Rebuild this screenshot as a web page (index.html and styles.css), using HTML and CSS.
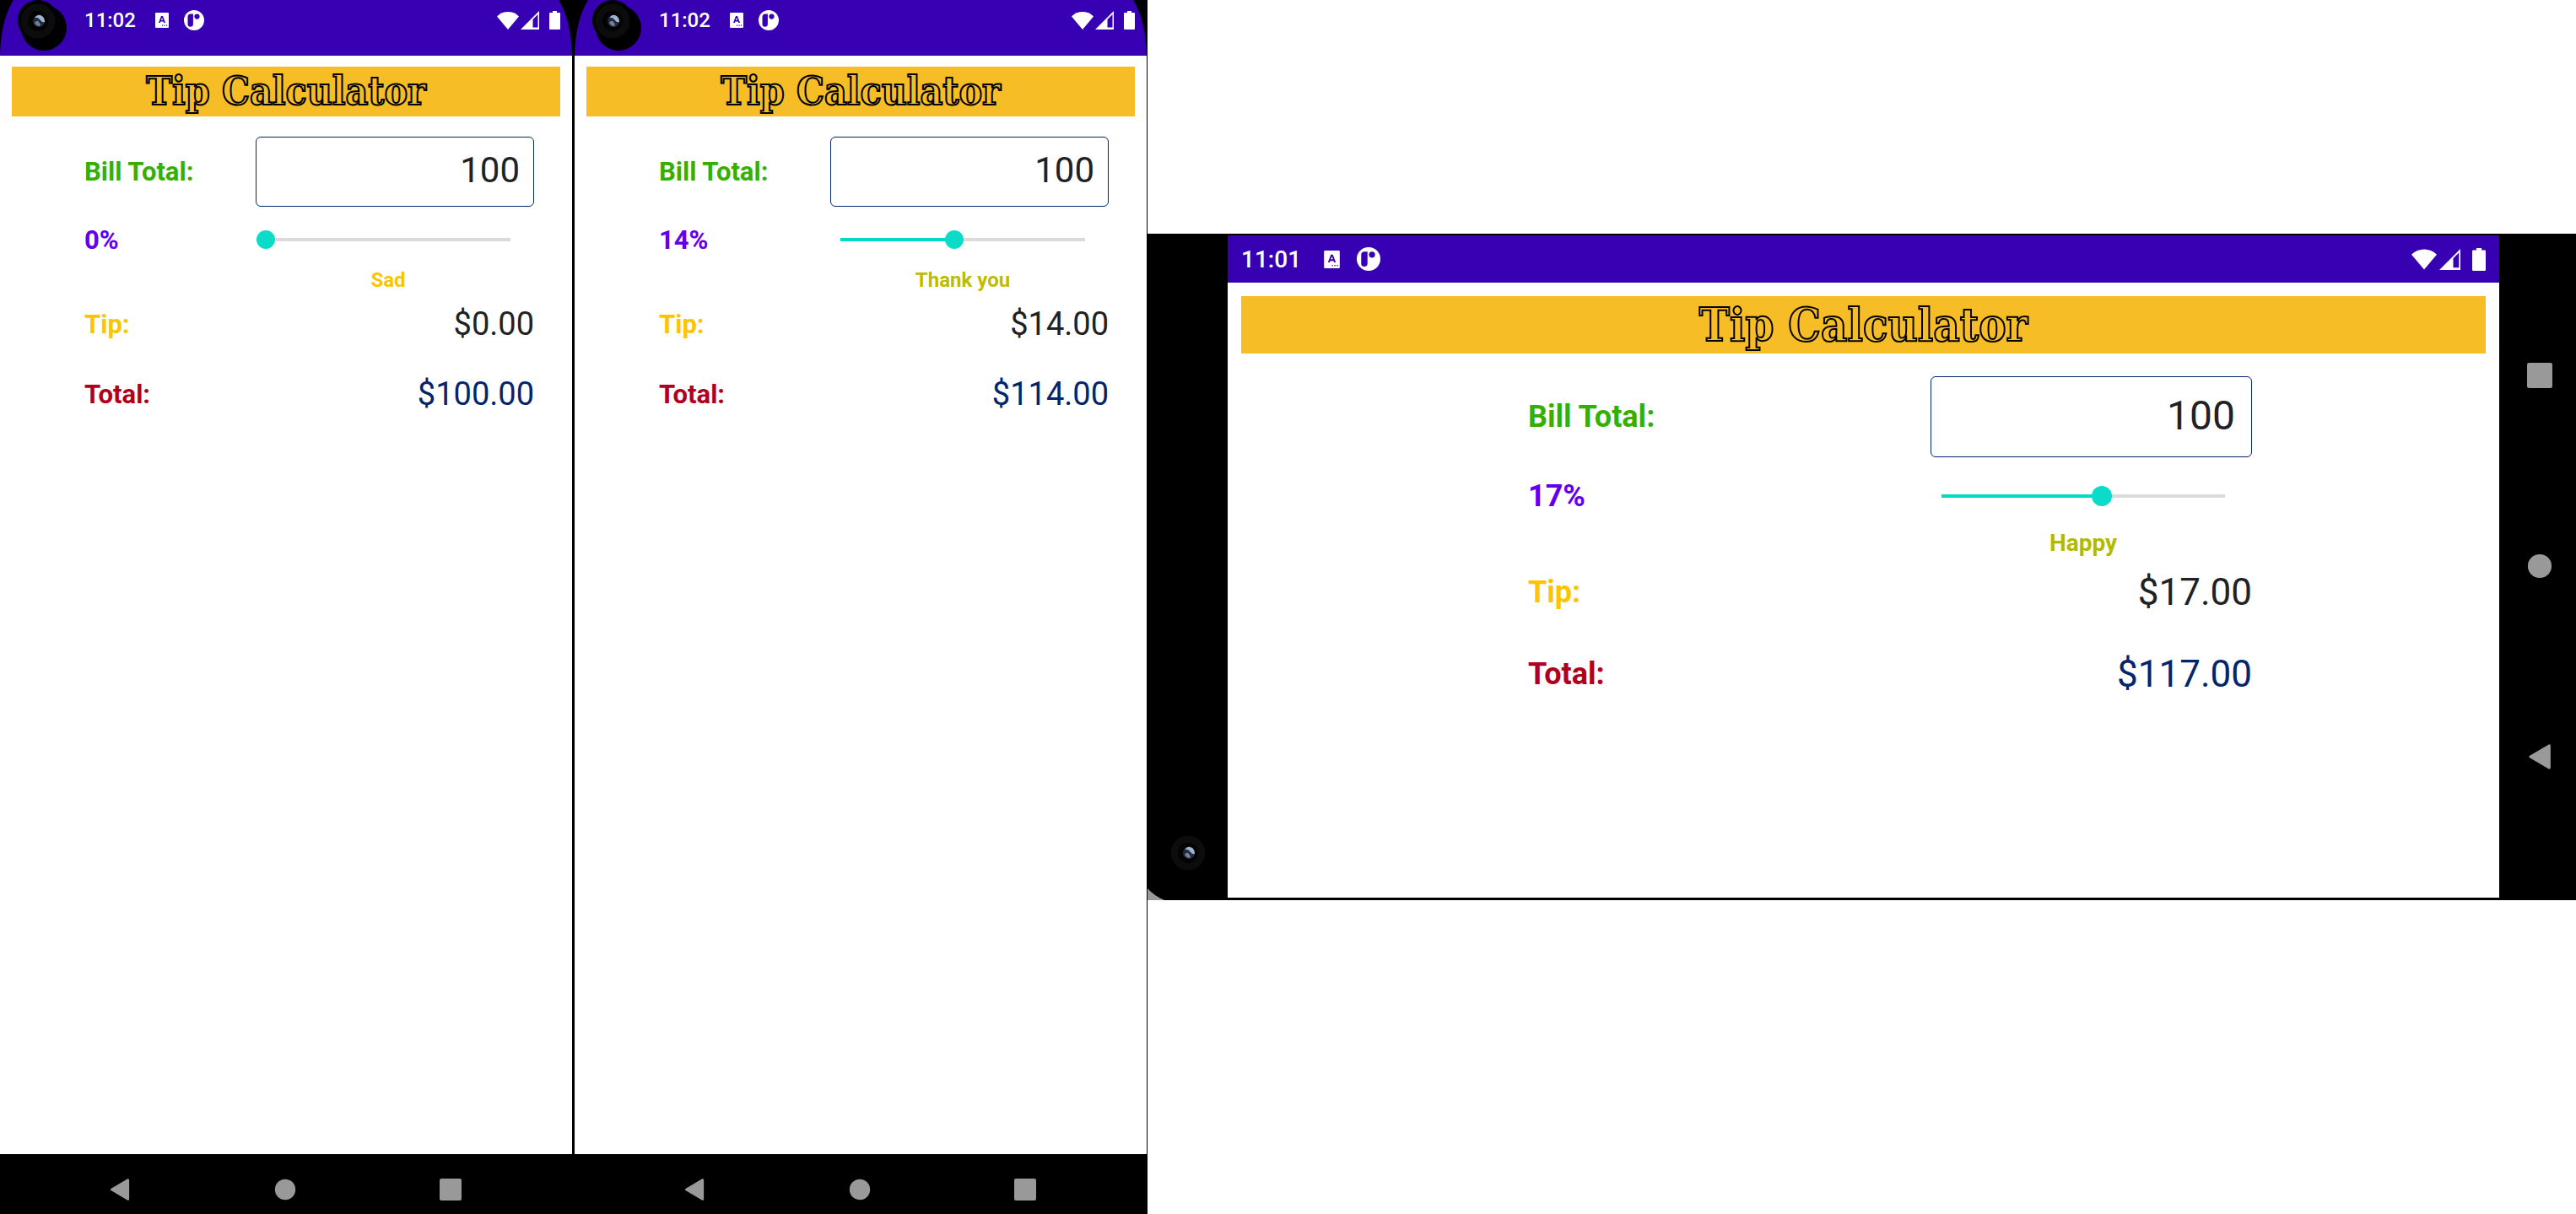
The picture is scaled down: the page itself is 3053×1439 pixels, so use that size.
FILE: index.html
```html
<!DOCTYPE html>
<html lang="en">
<head>
<meta charset="utf-8">
<title>Tip Calculator</title>
<link rel="stylesheet" href="styles.css">
</head>
<body>
<svg class="sprite" aria-hidden="true">
  <symbol id="i-keyboard" viewBox="0 0 16 18">
    <path fill="currentColor" fill-rule="evenodd" d="M1 0h14a1 1 0 0 1 1 1v16a1 1 0 0 1-1 1H1a1 1 0 0 1-1-1V1a1 1 0 0 1 1-1zM7 4 4 12h1.800l.6-1.600h3.200l.6 1.600H12L9 4zM8 6l1.100 2.800H6.900zM8 14.500v1.200h1.200v-1.200zM10.500 14.500v1.200h1.200v-1.200zM13 14.500v1.200h1.200v-1.200z"/>
  </symbol>
  <symbol id="i-app" viewBox="0 0 24 24">
    <path fill="currentColor" fill-rule="evenodd" d="M12 0a12 12 0 1 1 0 24 12 12 0 0 1 0-24zM8 4.500a3.500 3.500 0 0 0-3.500 3.500v8.500a3.200 3.200 0 0 0 6.400 0V4.500zM15.500 4.500a3 3 0 1 0 0 6.200 3 3 0 0 0 0-6.200z"/>
  </symbol>
  <symbol id="i-wifi" viewBox="0 0 26 21"><path fill="currentColor" d="M0 5.500C7-1.800 19-1.800 26 5.500L13 21z"/></symbol>
  <symbol id="i-signal" viewBox="0 0 22 22"><path fill="currentColor" fill-rule="evenodd" d="M22 0v22H0zM20.500 4 14.500 10v9.500h6z"/></symbol>
  <symbol id="i-battery" viewBox="0 0 13 22"><path fill="currentColor" d="M4 0h5v2h3a1 1 0 0 1 1 1v18a1 1 0 0 1-1 1H1a1 1 0 0 1-1-1V3a1 1 0 0 1 1-1h3z"/></symbol>
  <symbol id="i-back" viewBox="0 0 26 28"><path fill="currentColor" d="M1.600 13 23 .4Q25 0 25 2v24q0 2-2 1.600L1.600 15q-1.200-1 0-2z"/></symbol>
  <symbol id="i-home" viewBox="0 0 26 26"><circle fill="currentColor" cx="13" cy="13" r="12.200"/></symbol>
  <symbol id="i-recent" viewBox="0 0 26 26"><rect fill="currentColor" width="26" height="26" rx="2"/></symbol>
  <symbol id="i-lens" viewBox="0 0 42 42">
    <circle cx="21" cy="21" r="20.500" fill="#0c0c0c"/><circle cx="21" cy="21" r="12" fill="#030303"/>
    <circle cx="22" cy="21" r="7" fill="#242c3c"/>
    <path fill="#9db4d4" d="M17 17q3-4 7-3 5 2 5 8-3 1-5-2-3-4-7-3z"/><path fill="#71829d" d="M17 23q3-4 5-1 3 4 1 5-4 0-6-4z"/>
  </symbol>
  <symbol id="i-corner" viewBox="0 0 16 66"><path fill="#000" d="M0 0h16Q1 24 0 66z"/></symbol>
</svg>
<main class="board">

  <section class="device portrait">
    <div class="screen">
      <header class="status">
        <svg class="corner left"><use href="#i-corner"/></svg>
        <svg class="corner right"><use href="#i-corner"/></svg>
        <svg class="punch" viewBox="0 0 60 60" aria-hidden="true"><circle cx="24" cy="24" r="24"/><circle cx="31" cy="33" r="27"/><use href="#i-lens" x="3" y="4" width="42" height="42"/></svg>
        <time class="clock">11:02</time>
        <svg class="keyboard"><use href="#i-keyboard"/></svg>
        <svg class="app"><use href="#i-app"/></svg>
        <svg class="wifi"><use href="#i-wifi"/></svg>
        <svg class="signal"><use href="#i-signal"/></svg>
        <svg class="battery"><use href="#i-battery"/></svg>
      </header>
      <h1 class="title">Tip Calculator</h1>
      <form class="form">
        <label class="bill" for="bill-1">Bill Total:</label>
        <input class="amount" id="bill-1" type="text" inputmode="decimal" value="100">
        <label class="percent" for="rate-1">0%</label>
        <input class="rate" id="rate-1" type="range" min="0" max="30" value="0" style="--rate: 0">
        <output class="mood sad" for="rate-1">Sad</output>
        <label class="tip" for="tip-1">Tip:</label>
        <output class="value" id="tip-1">$0.00</output>
        <label class="total" for="total-1">Total:</label>
        <output class="value sum" id="total-1">$100.00</output>
      </form>
    </div>
    <nav class="nav">
      <button type="button" aria-label="Back"><svg><use href="#i-back"/></svg></button>
      <button type="button" aria-label="Home"><svg><use href="#i-home"/></svg></button>
      <button type="button" aria-label="Recent apps"><svg><use href="#i-recent"/></svg></button>
    </nav>
  </section>

  <section class="device portrait">
    <div class="screen">
      <header class="status">
        <svg class="corner left"><use href="#i-corner"/></svg>
        <svg class="corner right"><use href="#i-corner"/></svg>
        <svg class="punch" viewBox="0 0 60 60" aria-hidden="true"><circle cx="24" cy="24" r="24"/><circle cx="31" cy="33" r="27"/><use href="#i-lens" x="3" y="4" width="42" height="42"/></svg>
        <time class="clock">11:02</time>
        <svg class="keyboard"><use href="#i-keyboard"/></svg>
        <svg class="app"><use href="#i-app"/></svg>
        <svg class="wifi"><use href="#i-wifi"/></svg>
        <svg class="signal"><use href="#i-signal"/></svg>
        <svg class="battery"><use href="#i-battery"/></svg>
      </header>
      <h1 class="title">Tip Calculator</h1>
      <form class="form">
        <label class="bill" for="bill-2">Bill Total:</label>
        <input class="amount" id="bill-2" type="text" inputmode="decimal" value="100">
        <label class="percent" for="rate-2">14%</label>
        <input class="rate" id="rate-2" type="range" min="0" max="30" value="14" style="--rate: 14">
        <output class="mood thanks" for="rate-2">Thank you</output>
        <label class="tip" for="tip-2">Tip:</label>
        <output class="value" id="tip-2">$14.00</output>
        <label class="total" for="total-2">Total:</label>
        <output class="value sum" id="total-2">$114.00</output>
      </form>
    </div>
    <nav class="nav">
      <button type="button" aria-label="Back"><svg><use href="#i-back"/></svg></button>
      <button type="button" aria-label="Home"><svg><use href="#i-home"/></svg></button>
      <button type="button" aria-label="Recent apps"><svg><use href="#i-recent"/></svg></button>
    </nav>
  </section>

  <section class="device landscape">
    <div class="bezel">
      <svg class="lens"><use href="#i-lens"/></svg>
      <svg class="edge" viewBox="0 0 20 14" aria-hidden="true"><path fill="#999" d="M0 0q8 9 20 14H0z"/></svg>
    </div>
    <div class="screen">
      <header class="status">
        <time class="clock">11:01</time>
        <svg class="keyboard"><use href="#i-keyboard"/></svg>
        <svg class="app"><use href="#i-app"/></svg>
        <svg class="wifi"><use href="#i-wifi"/></svg>
        <svg class="signal"><use href="#i-signal"/></svg>
        <svg class="battery"><use href="#i-battery"/></svg>
      </header>
      <h1 class="title">Tip Calculator</h1>
      <form class="form">
        <label class="bill" for="bill-3">Bill Total:</label>
        <input class="amount" id="bill-3" type="text" inputmode="decimal" value="100">
        <label class="percent" for="rate-3">17%</label>
        <input class="rate" id="rate-3" type="range" min="0" max="30" value="17" style="--rate: 17">
        <output class="mood happy" for="rate-3">Happy</output>
        <label class="tip" for="tip-3">Tip:</label>
        <output class="value" id="tip-3">$17.00</output>
        <label class="total" for="total-3">Total:</label>
        <output class="value sum" id="total-3">$117.00</output>
      </form>
    </div>
    <nav class="nav">
      <button type="button" aria-label="Recent apps"><svg><use href="#i-recent"/></svg></button>
      <button type="button" aria-label="Home"><svg><use href="#i-home"/></svg></button>
      <button type="button" aria-label="Back"><svg><use href="#i-back"/></svg></button>
    </nav>
  </section>

</main>
</body>
</html>
```

FILE: styles.css
```css
* { box-sizing: border-box; }

body {
  margin: 0;
  background: #fff;
  font-family: Roboto, "Liberation Sans", sans-serif;
}

.sprite { position: absolute; width: 0; height: 0; }

.board {
  display: grid;
  grid-template-columns: 681fr 679fr 1693fr;
  min-height: 100vh;
}

.device {
  display: flex;
  background: #000;
}

.screen {
  flex: 1;
  background: #fff;
}

/* Portrait phones */
.portrait {
  --label: 31px;
  --amount: 42px;
  --value: 38px;
  --small: 24px;
  --title: 46px;
  --thumb: 22px;
  --icon: 26px;
  --inset: 16px;
  flex-direction: column;
  border-right: 3px solid #000;
}

.portrait + .portrait { border-right-width: 1px; }

/* Landscape phone */
.landscape {
  --label: 36px;
  --amount: 48px;
  --value: 44px;
  --small: 28px;
  --title: 54px;
  --thumb: 24px;
  --icon: 30px;
  --inset: 19px;
  align-self: start;
  aspect-ratio: 1693 / 790;
  margin-top: 277px;
  padding: 2px 0 3px;
}

/* Status bar */
.status {
  position: relative;
  display: flex;
  align-items: center;
  color: #fff;
  background: #3700b3;
}

.portrait .status { height: 66px; padding: 0 14px 18px 100px; }
.landscape .status { height: 56px; padding: 0 16px; }

.clock { font-size: var(--small); font-weight: 500; }

.portrait .keyboard { width: 16px; height: 18px; margin-left: 23px; }
.portrait .app { width: 24px; height: 24px; margin-left: 18px; }
.portrait .wifi { width: 26px; height: 21px; margin-left: auto; }
.portrait .signal { width: 22px; height: 22px; margin-left: 2px; }
.portrait .battery { width: 13px; height: 22px; margin-left: 12px; }

.landscape .keyboard { width: 19px; height: 21px; margin-left: 27px; }
.landscape .app { width: 28px; height: 28px; margin-left: 20px; }
.landscape .wifi { width: 30px; height: 25px; margin-left: auto; }
.landscape .signal { width: 25px; height: 25px; margin-left: 3px; }
.landscape .battery { width: 16px; height: 27px; margin-left: 14px; }

.corner { position: absolute; top: 0; width: 16px; height: 66px; }
.corner.left { left: 0; }
.corner.right { right: 0; transform: scaleX(-1); }

.punch { position: absolute; top: 0; left: 21px; width: 60px; height: 60px; }

/* Banner */
.title {
  color: #f6bd27;
  background: #f6bd27;
  -webkit-text-stroke: 2px #000;
  font-family: "DejaVu Serif Condensed", "DejaVu Serif", serif;
  font-size: var(--title);
  font-weight: 700;
  text-align: center;
}

.portrait .title { margin: 13px 14px 24px; line-height: 59px; }
.landscape .title { margin: 16px 16px 27px; line-height: 68px; }

/* Calculator */
.form {
  display: grid;
  align-items: center;
}

.portrait .form {
  grid-template-columns: 203fr 330fr;
  grid-template-rows: 83px 78px 18px 86px 80px;
  padding: 0 45px 0 100px;
}

.landscape .form {
  grid-template-columns: 477fr 381fr;
  grid-template-rows: 96px 92px 20px 96px 98px;
  padding: 0 293px 0 356px;
}

label { font-size: var(--label); font-weight: 700; }

.bill { color: #34b000; }
.percent { color: #6200ee; }
.tip { color: #ffc400; }
.total { color: #b00020; }

.amount {
  width: 100%;
  height: 100%;
  padding: 0 var(--inset) 4px;
  border: 1px solid #03256c;
  border-radius: 6px;
  background: #fff;
  color: #202224;
  font-family: inherit;
  font-size: var(--amount);
  text-align: right;
}

.rate {
  --track: calc(100% - var(--thumb));
  appearance: none;
  height: var(--thumb);
  margin: 0 17px 0 1px;
  background:
    linear-gradient(#03dac5, #03dac5) calc(var(--thumb) / 2) center / calc((100% - var(--thumb)) * var(--rate) / 30) 4px no-repeat,
    linear-gradient(#dadada, #dadada) center / var(--track) 4px no-repeat;
}

.rate::-webkit-slider-thumb {
  appearance: none;
  width: var(--thumb);
  height: var(--thumb);
  border-radius: 50%;
  background: #0adcc9;
}

.mood {
  grid-column: 2;
  margin: 0 17px 0 1px;
  font-size: var(--small);
  font-weight: 700;
  line-height: 18px;
  text-align: center;
}

.landscape .rate, .landscape .mood { margin-right: 20px; }

.sad { color: #ffc400; }
.thanks { color: #bfbc00; }
.happy { color: #b2ba00; }

.value {
  color: #202224;
  font-size: var(--value);
  text-align: right;
}

.sum { color: #03256c; }

/* Navigation keys */
.nav {
  display: flex;
  align-items: center;
  justify-content: space-between;
}

.portrait .nav { height: 71px; padding: 12px 131px 0 129px; }

.landscape .nav {
  flex-direction: column;
  width: 91px;
  padding: 151px 0 152px 5px;
}

.nav button {
  width: var(--icon);
  height: var(--icon);
  padding: 0;
  border: 0;
  background: none;
  color: #999;
}

.nav svg { display: block; width: 100%; height: 100%; }

.bezel {
  position: relative;
  display: flex;
  align-items: flex-end;
  justify-content: center;
  width: 95px;
  padding-bottom: 32px;
}

.lens { width: 42px; height: 42px; }

.edge { position: absolute; bottom: -3px; left: 0; width: 20px; height: 14px; }
```
